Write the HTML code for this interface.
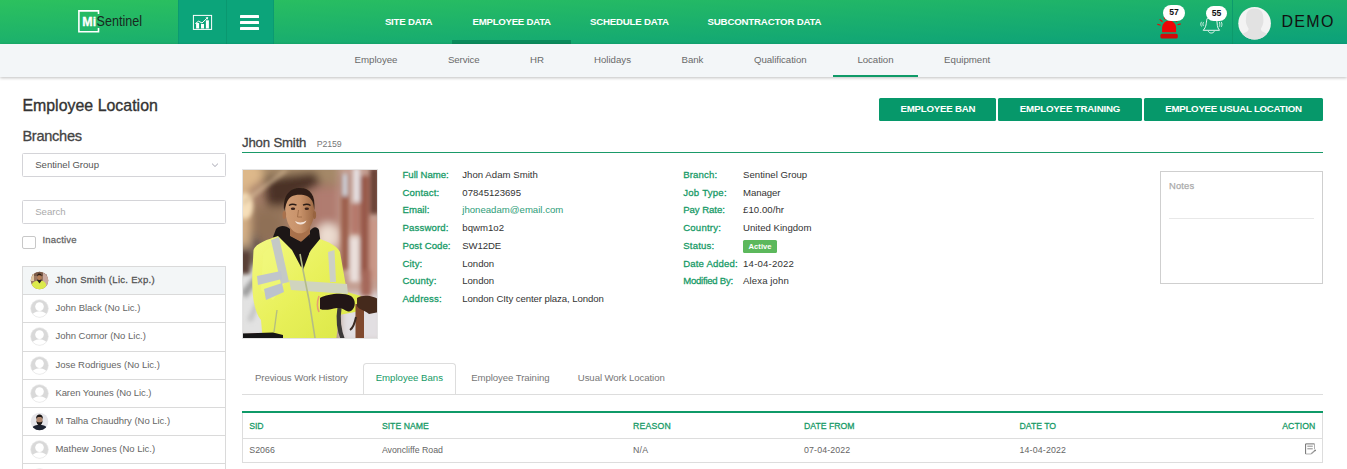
<!DOCTYPE html>
<html lang="en">
<head>
<meta charset="utf-8">
<title>Employee Location</title>
<style>
*{box-sizing:border-box;margin:0;padding:0}
html,body{width:1347px;height:469px;overflow:hidden;background:#fff}
body{font-family:"Liberation Sans",Arial,sans-serif;color:#333;position:relative;font-size:10px}
.abs{position:absolute}
.x{position:absolute;white-space:nowrap;line-height:20px;height:20px}
#hdr{position:absolute;left:0;top:0;width:1347px;height:44px;background:linear-gradient(to bottom right,#2cc15e,#0ba07a)}
#hdr .btn{position:absolute;top:0;height:44px;background:#0ca47a}
#sub{position:absolute;left:0;top:44px;width:1347px;height:33px;background:#f3f6f8;box-shadow:0 1px 3px rgba(0,0,0,.25)}
.gbtn{position:absolute;top:98px;height:23px;background:#06986a;border-radius:1.5px}
.li{position:absolute;left:22px;width:204px;height:29px;border:1px solid #dadada;background:#fff}
.li.sel{background:#f3f6f7}
.inp{position:absolute;left:22px;width:204px;height:24px;border:1px solid #d4d4d8;border-radius:1.5px;background:#fff}
.hl{position:absolute;left:242px;width:1081px;height:1px;background:#ddd}
</style>
</head>
<body>
<div id="hdr">
  <svg class="abs" style="left:70px;top:0" width="80" height="44" viewBox="70 0 80 44">
    <path d="M98.500 14V10.900H78.900V31.800H98.500V28" fill="none" stroke="#fff" stroke-width="1.600"/>
    <text x="82.300" y="26.100" font-family="Liberation Sans, Arial, sans-serif" font-weight="bold" font-size="13.600" fill="#fff" stroke="#fff" stroke-width=".32" textLength="13.800" lengthAdjust="spacingAndGlyphs">Mi</text>
    <text x="96.600" y="26.300" font-family="Liberation Sans, Arial, sans-serif" font-size="14.700" fill="#18281f" textLength="45.400" lengthAdjust="spacingAndGlyphs">Sentinel</text>
  </svg>
  <div class="btn" style="left:178px;width:96px"></div>
  <div class="abs" style="left:178px;top:0;width:1px;height:44px;background:#0b9a72"></div>
  <div class="abs" style="left:226px;top:0;width:1px;height:44px;background:#0a9870"></div>
  <div class="abs" style="left:273px;top:0;width:1px;height:44px;background:#0b9a72"></div>
  <svg class="abs" style="left:190px;top:12px" width="26" height="21" viewBox="190 12 26 21">
    <rect x="193.400" y="15.400" width="18.200" height="14" fill="none" stroke="#fff" stroke-width="1"/>
    <rect x="196.100" y="23" width="3" height="5.500" fill="#fff"/>
    <rect x="201" y="24" width="3" height="4.500" fill="#fff"/>
    <rect x="205.900" y="20.300" width="3" height="8.200" fill="#fff"/>
    <path d="M195.300 23.600L198.600 21.200L202 23L207 18.200" fill="none" stroke="#fff" stroke-width="1"/>
    <path d="M205.500 17.600L208.200 17L207.700 19.800Z" fill="#fff"/>
  </svg>
  
  <div class="abs" style="left:240px;top:15px;width:19.200px;height:3px;background:#fff;border-radius:.6px"></div>
  <div class="abs" style="left:240px;top:21px;width:19.200px;height:3px;background:#fff;border-radius:.6px"></div>
  <div class="abs" style="left:240px;top:27px;width:19.200px;height:3px;background:#fff;border-radius:.6px"></div>
  <div class="abs" style="left:452px;top:40px;width:119px;height:4px;background:#0b8b5c"></div>

  <!-- siren -->
  <svg class="abs" style="left:1150px;top:0" width="40" height="44" viewBox="1150 0 40 44">
    <path d="M1162.100 32.300V27.600a7 7 0 0 1 14 0V32.300Z" fill="#ee0505"/>
    <rect x="1160.400" y="33.700" width="17.400" height="4.900" rx="1.700" fill="#d20a0a"/>
    <path d="M1157.300 24.200L1160.600 25.300M1159.700 19.400L1162.500 21.700M1164 17.400L1165.500 19.400M1180.700 23.900L1177.500 24.700M1178.500 19.600L1176 21.600" stroke="#ee0505" stroke-width="1.100" fill="none"/>
  </svg>
  <div class="abs" style="left:1163px;top:5.300px;width:22px;height:15.500px;border-radius:8px;background:#fff"></div>
  <div class="x" style="left:1163px;width:22px;top:2.200px;text-align:center;font-size:8.600px;font-weight:bold;color:#111">57</div>
  <!-- bell -->
  <svg class="abs" style="left:1196px;top:10px" width="32" height="28" viewBox="1196 10 32 28">
    <path d="M1206.800 19.500C1206.200 23 1206.400 27 1203.200 30.300H1219.500C1216.800 27.500 1217.400 23.500 1216.800 20.500C1216.200 17.500 1214.200 16.500 1211.800 16.500C1209.400 16.500 1207.300 17.500 1206.800 19.500Z" fill="none" stroke="#fff" stroke-width=".9"/>
    <path d="M1208.300 31.300C1209.300 33.600 1213.300 33.600 1214.300 31.300" fill="none" stroke="#fff" stroke-width=".9"/>
    <path d="M1201.600 21.800C1200.500 23.300 1200.500 25 1201.600 26.500M1203.500 22.200C1202.700 23.400 1202.700 24.900 1203.500 26.100M1219.300 21.800C1220 23.300 1220 25.200 1219.300 26.700M1221.200 21.800C1222.200 23.300 1222.200 25.300 1221.200 26.900" fill="none" stroke="#fff" stroke-width=".8"/>
  </svg>
  <div class="abs" style="left:1206px;top:6px;width:21px;height:15.400px;border-radius:8px;background:#fff"></div>
  <div class="x" style="left:1206px;width:21px;top:3px;text-align:center;font-size:8.600px;font-weight:bold;color:#111">55</div>
  <div class="abs" style="left:1232px;top:0;width:1px;height:44px;background:#0d9a6c"></div>
  <svg class="abs" style="left:1238px;top:6.600px" width="34" height="34" viewBox="0 0 34 34">
    <defs><clipPath id="avc"><circle cx="16.600" cy="16.300" r="16.300"/></clipPath></defs>
    <circle cx="16.600" cy="16.300" r="16.300" fill="#f3f3f3"/>
    <g clip-path="url(#avc)" fill="#e2e2e2">
      <path d="M16.700 1.600C11.500 1.600 8.500 4.500 8.300 8.500C8.100 11 7.600 13 8 15.600C8.400 18.200 9.600 20 10.500 21.400C10.700 22.600 10.300 23.600 9.500 24.300C8 25.400 6.200 26 4.700 26.700C2.500 27.800 1 30 0 34H33.400C32.400 30 30.900 27.800 28.800 26.700C27.200 26 25.500 25.400 24 24.300C23.200 23.600 22.800 22.600 23 21.400C23.900 20 25 18.200 25.300 15.600C25.700 13 25.200 11 25 8.500C24.800 4.500 21.900 1.600 16.700 1.600Z"/>
    </g>
  </svg>
</div>
<div id="sub">
  <div class="abs" style="left:833px;top:31px;width:85px;height:2px;background:#0f9a68"></div>
</div>

<!-- left panel -->
<div class="inp" style="top:153px"></div>
<svg class="abs" style="left:210px;top:161px" width="10" height="8" viewBox="0 0 10 8"><path d="M2.100 2.700L5 5.500L7.900 2.700" fill="none" stroke="#a6a6b2" stroke-width="1"/></svg>
<div class="inp" style="top:200px"></div>
<div class="abs" style="left:22px;top:236px;width:13.500px;height:12.500px;border:1px solid #c8c8c8;border-radius:2px;background:#fff"></div>
<div class="li sel" style="top:266px;height:29px"></div>
<div class="li" style="top:294px;height:29px"></div>
<div class="li" style="top:322px;height:30px"></div>
<div class="li" style="top:351px;height:29px"></div>
<div class="li" style="top:379px;height:29px"></div>
<div class="li" style="top:407px;height:29px"></div>
<div class="li" style="top:435px;height:29px"></div>
<div class="li" style="top:463px;height:29px"></div>
<svg class="abs" style="left:29.60px;top:270.90px" width="19" height="19" viewBox="0 0 19 19"><defs><clipPath id="lc"><circle cx="9.5" cy="9.5" r="8.800"/></clipPath></defs><circle cx="9.5" cy="9.5" r="8.8" fill="#9a7660"/><g clip-path="url(#lc)"><rect x="0" y="0" width="19" height="5" fill="#7a5a48"/><rect x="13" y="2" width="6" height="12" fill="#c9a99f"/><rect x="0" y="3" width="4" height="7" fill="#e0c6a2"/><path d="M2 19V13C3 10.500 6 10 7.500 9.500L9.500 12L11.500 9.500C13 10 15 10.500 16 13V19Z" fill="#dcea4c"/><path d="M7 9.300L9.500 12.500L11.800 9.300L11 8H8Z" fill="#2a2220"/><ellipse cx="9.400" cy="6.300" rx="2.100" ry="2.800" fill="#b47c55"/><path d="M7.200 5.600C7 3 8.500 2.600 9.400 2.600C10.500 2.600 11.800 3.200 11.600 5.600C11 4.400 10.400 4.200 9.400 4.200C8.400 4.200 7.800 4.400 7.200 5.600Z" fill="#2c1d15"/></g></svg>
<svg class="abs" style="left:29.60px;top:298.90px" width="19" height="19" viewBox="0 0 19 19"><circle cx="9.5" cy="9.5" r="8.800" fill="#d9d9d9"/><g clip-path="url(#lc)"><circle cx="9.500" cy="7.600" r="4.300" fill="#fff"/><ellipse cx="9.500" cy="18.300" rx="8.200" ry="6" fill="#fff"/></g><circle cx="9.5" cy="9.5" r="8.800" fill="none" stroke="#e4e4e4" stroke-width=".6"/></svg>
<svg class="abs" style="left:29.60px;top:326.90px" width="19" height="19" viewBox="0 0 19 19"><circle cx="9.5" cy="9.5" r="8.800" fill="#d9d9d9"/><g clip-path="url(#lc)"><circle cx="9.500" cy="7.600" r="4.300" fill="#fff"/><ellipse cx="9.500" cy="18.300" rx="8.200" ry="6" fill="#fff"/></g><circle cx="9.5" cy="9.5" r="8.800" fill="none" stroke="#e4e4e4" stroke-width=".6"/></svg>
<svg class="abs" style="left:29.60px;top:355.90px" width="19" height="19" viewBox="0 0 19 19"><circle cx="9.5" cy="9.5" r="8.800" fill="#d9d9d9"/><g clip-path="url(#lc)"><circle cx="9.500" cy="7.600" r="4.300" fill="#fff"/><ellipse cx="9.500" cy="18.300" rx="8.200" ry="6" fill="#fff"/></g><circle cx="9.5" cy="9.5" r="8.800" fill="none" stroke="#e4e4e4" stroke-width=".6"/></svg>
<svg class="abs" style="left:29.60px;top:383.90px" width="19" height="19" viewBox="0 0 19 19"><circle cx="9.5" cy="9.5" r="8.800" fill="#d9d9d9"/><g clip-path="url(#lc)"><circle cx="9.500" cy="7.600" r="4.300" fill="#fff"/><ellipse cx="9.500" cy="18.300" rx="8.200" ry="6" fill="#fff"/></g><circle cx="9.5" cy="9.5" r="8.800" fill="none" stroke="#e4e4e4" stroke-width=".6"/></svg>
<svg class="abs" style="left:29.60px;top:411.90px" width="19" height="19" viewBox="0 0 19 19"><circle cx="9.5" cy="9.5" r="8.8" fill="#e6e6ea"/><g clip-path="url(#lc)"><path d="M2 19V16C3 13.500 6.500 13 9.500 13C12.500 13 16 13.500 17 16V19Z" fill="#1c2230"/><ellipse cx="9.500" cy="8" rx="3.100" ry="4" fill="#b08870"/><path d="M6.400 8.500C6.600 12 8 13.200 9.500 13.200C11 13.200 12.400 12 12.600 8.500C12 10 11 10.200 9.500 10.200C8 10.200 7 10 6.400 8.500Z" fill="#1a1514"/><path d="M6.200 7.500C5.800 3.500 8 2.600 9.500 2.600C11 2.600 13.200 3.500 12.800 7.500C12.400 5.500 11.500 5 9.500 5C7.500 5 6.600 5.500 6.200 7.500Z" fill="#1a1514"/></g></svg>
<svg class="abs" style="left:29.60px;top:439.90px" width="19" height="19" viewBox="0 0 19 19"><circle cx="9.5" cy="9.5" r="8.800" fill="#d9d9d9"/><g clip-path="url(#lc)"><circle cx="9.500" cy="7.600" r="4.300" fill="#fff"/><ellipse cx="9.500" cy="18.300" rx="8.200" ry="6" fill="#fff"/></g><circle cx="9.5" cy="9.5" r="8.800" fill="none" stroke="#e4e4e4" stroke-width=".6"/></svg>
<svg class="abs" style="left:29.60px;top:467.90px" width="19" height="19" viewBox="0 0 19 19"><circle cx="9.5" cy="9.5" r="8.800" fill="#d9d9d9"/><g clip-path="url(#lc)"><circle cx="9.500" cy="7.600" r="4.300" fill="#fff"/><ellipse cx="9.500" cy="18.300" rx="8.200" ry="6" fill="#fff"/></g><circle cx="9.5" cy="9.5" r="8.800" fill="none" stroke="#e4e4e4" stroke-width=".6"/></svg>

<!-- action buttons -->
<div class="gbtn" style="left:879px;width:117px"></div>
<div class="gbtn" style="left:998px;width:144px"></div>
<div class="gbtn" style="left:1144px;width:179px"></div>

<!-- main -->
<div class="abs" style="left:242px;top:152px;width:1081px;height:1px;background:#1a9a69"></div>
<div class="abs" style="left:242px;top:169px;width:136px;height:170px;border:1px solid #e4e4e4"></div>
<svg class="abs" style="left:243px;top:170px" width="134" height="168" viewBox="0 0 134 168">
  <defs>
    <filter id="b4" x="-30%" y="-30%" width="160%" height="160%"><feGaussianBlur stdDeviation="4"/></filter>
    <filter id="b2" x="-30%" y="-30%" width="160%" height="160%"><feGaussianBlur stdDeviation="2"/></filter>
    <filter id="b1" x="-20%" y="-20%" width="140%" height="140%"><feGaussianBlur stdDeviation="1"/></filter>
    <filter id="b0" x="-20%" y="-20%" width="140%" height="140%"><feGaussianBlur stdDeviation="0.75"/></filter>
    <clipPath id="pc"><rect width="134" height="168"/></clipPath>
    <linearGradient id="jk" x1="0" y1="0" x2="1" y2="1">
      <stop offset="0" stop-color="#f3f884"/><stop offset=".45" stop-color="#e9f15c"/><stop offset="1" stop-color="#d9e644"/>
    </linearGradient>
    <linearGradient id="sk" x1="0" y1="0" x2="1" y2="0">
      <stop offset="0" stop-color="#cf9c74"/><stop offset=".5" stop-color="#c8926a"/><stop offset="1" stop-color="#9c6844"/>
    </linearGradient>
  </defs>
  <g clip-path="url(#pc)">
    <rect width="134" height="168" fill="#a27c66"/>
    <!-- soft background -->
    <g filter="url(#b4)">
      <rect x="-10" y="-10" width="160" height="22" fill="#a48868"/>
      <ellipse cx="4" cy="4" rx="16" ry="14" fill="#ddb88a"/>
      <path d="M22 8L72 2L78 14L56 24L42 36L24 36Z" fill="#4c3226"/>
      <rect x="8" y="36" width="34" height="36" fill="#94745a"/>
      <rect x="70" y="18" width="28" height="44" fill="#b07c70"/>
      <rect x="72" y="56" width="28" height="26" fill="#c9a092"/>
      <rect x="96" y="-8" width="46" height="140" fill="#c39d90"/>
      <rect x="-8" y="64" width="34" height="36" fill="#78665c"/>
      <rect x="-8" y="98" width="34" height="72" fill="#e2e2e2"/>
      <rect x="96" y="124" width="46" height="50" fill="#e2dfe2"/>
      <rect x="102" y="62" width="36" height="40" fill="#dcc2b6"/>
      <rect x="-8" y="14" width="15" height="62" fill="#ddb88c" opacity=".9"/>
      <ellipse cx="85" cy="66" rx="11" ry="13" fill="#ecdcd0"/>
      <ellipse cx="24" cy="58" rx="12" ry="16" fill="#8f6f56"/>
    </g>
    <g filter="url(#b2)">
      <ellipse cx="2" cy="36" rx="8" ry="13" fill="#f6dfba"/>
      <path d="M0 30L40 0L46 0L0 36Z" fill="#d9bc98" opacity=".7"/>
      <rect x="98" y="4" width="8" height="96" fill="#9c5e4c"/>
      <rect x="100" y="4" width="4" height="22" fill="#d9e2ea"/>
      <rect x="110" y="-2" width="7" height="34" fill="#e6e0e2"/>
      <rect x="117" y="6" width="9" height="100" fill="#98584a"/>
      <rect x="127" y="-2" width="9" height="46" fill="#6a4236"/>
      <rect x="108" y="34" width="8" height="30" fill="#b5786a"/>
      <rect x="107" y="68" width="9" height="44" fill="#eadfdc"/>
      <rect x="126" y="50" width="10" height="60" fill="#c99888"/>
      <rect x="-3" y="82" width="10" height="22" fill="#584034"/>
      <rect x="12" y="70" width="4" height="26" fill="#6d594e"/>
      <path d="M-2 122L14 102L19 106L3 128Z" fill="#9c9c9c"/>
      <path d="M4 150L18 120L22 122L9 152Z" fill="#c4c4c4"/>
      <rect x="118" y="100" width="10" height="26" fill="#a5685a"/>
    </g>
    <!-- figure -->
    <g filter="url(#b0)">
      <!-- hood -->
      <path d="M33 59C38 54 44 56 48 60L66 62C70 56 74 56 76 60L78 76L66 100L56 104L46 84L30 67Z" fill="#1c1919"/>
      <!-- neck -->
      <path d="M47 52H67V67L58 72L47 66Z" fill="#a9714b"/>
      <!-- jacket -->
      <path d="M10.500 80C13 73 25 69.500 35 66L49 80L58 97L68 80L77 69C86 72 94 76 97 82L104 122L118 126L122 138L112 142L96 145L93 172H20L18 150C10 140 8.500 120 9.500 100Z" fill="url(#jk)"/>
      <path d="M20 84C26 76 34 74 40 76L44 110L30 130L18 120Z" fill="#f1f87e" opacity=".55"/>
      <!-- inner black -->
      <path d="M46 66L58 72L67 64L66 84L60 100L54 86Z" fill="#1c1919"/>
      <!-- stripes -->
      <path d="M28 70L36 67L46 112L38 114Z" fill="#c4c9c6"/>
      <path d="M85 82L91.500 80L93 112L87 112Z" fill="#cdd0c4"/>
      <path d="M14 106L38 101L39 109L15 115Z" fill="#c0c5cc"/>
      <path d="M21 119L39 113L41 122L23 130Z" fill="#bcc2cc"/>
      <path d="M46 110L104 114L105 124L48 120Z" fill="#d0d4be"/>
      <path d="M57 84L60 100L66 130L72 168" fill="none" stroke="#b4bc86" stroke-width="1.600"/>
      <path d="M34 140L31 162" fill="none" stroke="#b5bf80" stroke-width="1.400"/>
      <path d="M76 126C74 132 74 138 76 142" fill="none" stroke="#e8a070" stroke-width="1.600"/>
      <!-- head -->
      <path d="M42.500 40C42.500 27 48 21 56.800 21C65.500 21 71.500 27 71.500 40C71.500 51 66 63.300 56.800 63.300C47.500 63.300 42.500 51 42.500 40Z" fill="url(#sk)"/>
      <path d="M41.200 41C39.500 25 47 18 57 18C67 18 73 25 71.200 40C70.800 33 69 28.500 64 26C60 24.300 52 24.300 48.500 26.500C44.500 29 43 34 41.200 41Z" fill="#2e1e16"/>
      <ellipse cx="41.300" cy="45" rx="1.800" ry="4" fill="#a9724d"/>
      <ellipse cx="71.500" cy="45" rx="1.600" ry="4" fill="#98643f"/>
      <path d="M52 51C55 53 60 53 63.500 50.500C62 55.500 54 56 52 51Z" fill="#f3e4da"/>
      <path d="M46 35.500C48 34 51 34 53.500 35.200M60 35.200C62.500 34 65.500 34 67.500 35.500" stroke="#2a1b14" stroke-width="1.300" fill="none"/>
      <ellipse cx="50" cy="38.800" rx="2.200" ry="1.200" fill="#3a241a"/>
      <ellipse cx="63.800" cy="38.800" rx="2.200" ry="1.200" fill="#3a241a"/>
      <path d="M55.500 40L54.500 47H59" stroke="#9a6844" stroke-width=".8" fill="none"/>
      <!-- handles + gloves -->
      <path d="M96.500 138C94.500 150 96 160 100 170" fill="none" stroke="#3a3838" stroke-width="4.200"/>
      <rect x="112.500" y="134" width="8.500" height="36" fill="#80492f"/>
      <path d="M107 160C110 158 112 152 113 147" fill="none" stroke="#3a2a24" stroke-width="2"/>
      <path d="M77 128C84 124 100 122 108 126C113 129 113 138 108 141C104 143 100 137 94 138C88 139 82 141 77 139Z" fill="#241813"/>
      <path d="M114 128C120 124 132 126 136 130V142L126 144C122 140 116 140 114 136Z" fill="#45291c"/>
      <path d="M-2 163.500L30 162.500L40 165V172H-2Z" fill="#181313"/>
    </g>
  </g>
</svg>

<div class="abs" style="left:743px;top:240px;width:34px;height:12.700px;background:#5cb85c;border-radius:1.500px"></div>
<div class="abs" style="left:1160px;top:171px;width:163px;height:113px;border:1px solid #cfcfcf"></div>
<div class="abs" style="left:1169px;top:218px;width:145px;height:1px;background:#e8e8e8"></div>

<!-- tabs -->
<div class="hl" style="top:394px"></div>
<div class="abs" style="left:363px;top:363px;width:93px;height:31px;border:1px solid #ddd;border-bottom:none;border-radius:3.500px 3.500px 0 0;background:#fff"></div>

<!-- table -->
<div class="abs" style="left:242px;top:413px;width:1081px;height:49.500px;border:1px solid #ddd;border-top:none;background:#fff"></div>
<div class="hl" style="top:438px"></div>
<div class="abs" style="left:242px;top:411px;width:1081px;height:2px;background:#0f9a68"></div>
<svg class="abs" style="left:1304px;top:441.600px" width="14" height="14" viewBox="0 0 14 14">
  <path d="M1.600 12V1.900H10.500" fill="none" stroke="#707070" stroke-width="1"/>
  <path d="M10.500 1.900V7.300M1.600 12H7.200" fill="none" stroke="#a8a8a8" stroke-width=".9"/>
  <path d="M3.300 4.200H8.800M3.300 6.800H8.800" stroke="#808080" stroke-width=".9"/>
  <path d="M7.200 11.800L11.300 8.200" stroke="#9a9a9a" stroke-width="1.300"/>
  <path d="M10.300 8.300L11.800 7.400L11.700 9.200Z" fill="#666"/>
</svg>
<div class="x" id="t0" style="left:384.9px;top:12.00px;font-size:9.7px;color:#fff;letter-spacing:-0.245px;font-weight:bold;">SITE DATA</div>
<div class="x" id="t1" style="left:472.5px;top:12.00px;font-size:9.7px;color:#fff;letter-spacing:-0.285px;font-weight:bold;">EMPLOYEE DATA</div>
<div class="x" id="t2" style="left:589.9px;top:12.00px;font-size:9.7px;color:#fff;letter-spacing:-0.204px;font-weight:bold;">SCHEDULE DATA</div>
<div class="x" id="t3" style="left:707.5px;top:12.00px;font-size:9.7px;color:#fff;letter-spacing:-0.19px;font-weight:bold;">SUBCONTRACTOR DATA</div>
<div class="x" id="t4" style="left:354.5px;top:50.00px;font-size:9.7px;color:#6a6a6a;letter-spacing:-0.012px;">Employee</div>
<div class="x" id="t5" style="left:448px;top:50.00px;font-size:9.7px;color:#6a6a6a;letter-spacing:-0.116px;">Service</div>
<div class="x" id="t6" style="left:530px;top:50.00px;font-size:9.7px;color:#6a6a6a;letter-spacing:-0.1px;">HR</div>
<div class="x" id="t7" style="left:593.9px;top:50.00px;font-size:9.7px;color:#6a6a6a;letter-spacing:-0.007px;">Holidays</div>
<div class="x" id="t8" style="left:681.5px;top:50.00px;font-size:9.7px;color:#6a6a6a;letter-spacing:-0.048px;">Bank</div>
<div class="x" id="t9" style="left:753.9px;top:50.00px;font-size:9.7px;color:#6a6a6a;letter-spacing:-0.047px;">Qualification</div>
<div class="x" id="t10" style="left:857.4px;top:50.00px;font-size:9.7px;color:#6a6a6a;letter-spacing:-0.068px;">Location</div>
<div class="x" id="t11" style="left:944.1px;top:50.00px;font-size:9.7px;color:#6a6a6a;letter-spacing:-0.025px;">Equipment</div>
<div class="x" id="t12" style="left:22.4px;top:96.00px;font-size:15.9px;color:#333;letter-spacing:0.02px;-webkit-text-stroke:.35px #333;">Employee Location</div>
<div class="x" id="t13" style="left:22.4px;top:126.00px;font-size:14.6px;color:#444;letter-spacing:-0.282px;-webkit-text-stroke:.3px #444;">Branches</div>
<div class="x" id="t14" style="left:242px;top:133.00px;font-size:13.2px;color:#444;letter-spacing:-0.168px;-webkit-text-stroke:.3px #444;">Jhon Smith</div>
<div class="x" id="t15" style="left:316.8px;top:134.00px;font-size:8.8px;color:#777;letter-spacing:-0.127px;">P2159</div>
<div class="x" id="t16" style="left:35.2px;top:155.00px;font-size:9.6px;color:#555;letter-spacing:-0.014px;">Sentinel Group</div>
<div class="x" id="t17" style="left:35.2px;top:202.00px;font-size:9.6px;color:#aaa;letter-spacing:-0.001px;">Search</div>
<div class="x" id="t18" style="left:42.4px;top:230.00px;font-size:9.5px;color:#666;letter-spacing:0.206px;-webkit-text-stroke:0.27px #666;">Inactive</div>
<div class="x" id="t19" style="left:55.4px;top:270.00px;font-size:9.5px;color:#555;letter-spacing:0.299px;-webkit-text-stroke:0.27px #555;">Jhon Smith (Lic. Exp.)</div>
<div class="x" id="t20" style="left:55.4px;top:298.00px;font-size:9.5px;color:#666;letter-spacing:-0.001px;">John Black (No Lic.)</div>
<div class="x" id="t21" style="left:55.4px;top:326.00px;font-size:9.5px;color:#666;letter-spacing:-0.015px;">John Cornor (No Lic.)</div>
<div class="x" id="t22" style="left:55.4px;top:355.00px;font-size:9.5px;color:#666;letter-spacing:-0.002px;">Jose Rodrigues (No Lic.)</div>
<div class="x" id="t23" style="left:55.4px;top:383.00px;font-size:9.5px;color:#666;letter-spacing:-0.077px;">Karen Younes (No Lic.)</div>
<div class="x" id="t24" style="left:55.4px;top:411.00px;font-size:9.5px;color:#666;letter-spacing:-0.03px;">M Talha Chaudhry (No Lic.)</div>
<div class="x" id="t25" style="left:55.4px;top:439.00px;font-size:9.5px;color:#666;letter-spacing:0.0px;">Mathew Jones (No Lic.)</div>
<div class="x" id="t26" style="left:900.4px;top:99.00px;font-size:9.7px;color:#fff;letter-spacing:-0.218px;font-weight:bold;">EMPLOYEE BAN</div>
<div class="x" id="t27" style="left:1019.7px;top:99.00px;font-size:9.7px;color:#fff;letter-spacing:-0.167px;font-weight:bold;">EMPLOYEE TRAINING</div>
<div class="x" id="t28" style="left:1165.2px;top:99.00px;font-size:9.7px;color:#fff;letter-spacing:-0.247px;font-weight:bold;">EMPLOYEE USUAL LOCATION</div>
<div class="x" id="t29" style="left:402.5px;top:165.00px;font-size:9.6px;color:#169a66;letter-spacing:-0.029px;-webkit-text-stroke:0.27px #169a66;">Full Name:</div>
<div class="x" id="t30" style="left:462.3px;top:165.00px;font-size:9.6px;color:#333;letter-spacing:0.026px;">Jhon Adam Smith</div>
<div class="x" id="t31" style="left:402.5px;top:183.00px;font-size:9.6px;color:#169a66;letter-spacing:0.146px;-webkit-text-stroke:0.27px #169a66;">Contact:</div>
<div class="x" id="t32" style="left:462.3px;top:183.00px;font-size:9.6px;color:#333;letter-spacing:-0.0px;">07845123695</div>
<div class="x" id="t33" style="left:402.5px;top:200.00px;font-size:9.6px;color:#169a66;letter-spacing:0.041px;-webkit-text-stroke:0.27px #169a66;">Email:</div>
<div class="x" id="t34" style="left:462.3px;top:200.00px;font-size:9.6px;color:#2e9d78;letter-spacing:0.003px;">jhoneadam@email.com</div>
<div class="x" id="t35" style="left:402.5px;top:218.00px;font-size:9.6px;color:#169a66;letter-spacing:0.145px;-webkit-text-stroke:0.27px #169a66;">Password:</div>
<div class="x" id="t36" style="left:462.3px;top:218.00px;font-size:9.6px;color:#333;letter-spacing:0.013px;">bqwm1o2</div>
<div class="x" id="t37" style="left:402.5px;top:236.00px;font-size:9.6px;color:#169a66;letter-spacing:0.063px;-webkit-text-stroke:0.27px #169a66;">Post Code:</div>
<div class="x" id="t38" style="left:462.3px;top:236.00px;font-size:9.6px;color:#333;letter-spacing:-0.126px;">SW12DE</div>
<div class="x" id="t39" style="left:402.5px;top:254.00px;font-size:9.6px;color:#169a66;letter-spacing:0.142px;-webkit-text-stroke:0.27px #169a66;">City:</div>
<div class="x" id="t40" style="left:462.3px;top:254.00px;font-size:9.6px;color:#333;letter-spacing:-0.053px;">London</div>
<div class="x" id="t41" style="left:402.5px;top:271.00px;font-size:9.6px;color:#169a66;letter-spacing:0.146px;-webkit-text-stroke:0.27px #169a66;">County:</div>
<div class="x" id="t42" style="left:462.3px;top:271.00px;font-size:9.6px;color:#333;letter-spacing:-0.053px;">London</div>
<div class="x" id="t43" style="left:402.5px;top:289.00px;font-size:9.6px;color:#169a66;letter-spacing:0.191px;-webkit-text-stroke:0.27px #169a66;">Address:</div>
<div class="x" id="t44" style="left:462.3px;top:289.00px;font-size:9.6px;color:#333;letter-spacing:-0.079px;">London CIty center plaza, London</div>
<div class="x" id="t45" style="left:683.2px;top:165.00px;font-size:9.6px;color:#169a66;letter-spacing:0.16px;-webkit-text-stroke:0.27px #169a66;">Branch:</div>
<div class="x" id="t46" style="left:743.1px;top:165.00px;font-size:9.6px;color:#333;letter-spacing:0.007px;">Sentinel Group</div>
<div class="x" id="t47" style="left:683.2px;top:183.00px;font-size:9.6px;color:#169a66;letter-spacing:0.251px;-webkit-text-stroke:0.27px #169a66;">Job Type:</div>
<div class="x" id="t48" style="left:743.1px;top:183.00px;font-size:9.6px;color:#333;letter-spacing:-0.068px;">Manager</div>
<div class="x" id="t49" style="left:683.2px;top:200.00px;font-size:9.6px;color:#169a66;letter-spacing:-0.049px;-webkit-text-stroke:0.27px #169a66;">Pay Rate:</div>
<div class="x" id="t50" style="left:743.1px;top:200.00px;font-size:9.6px;color:#333;letter-spacing:0.039px;">£10.00/hr</div>
<div class="x" id="t51" style="left:683.2px;top:218.00px;font-size:9.6px;color:#169a66;letter-spacing:0.204px;-webkit-text-stroke:0.27px #169a66;">Country:</div>
<div class="x" id="t52" style="left:743.1px;top:218.00px;font-size:9.6px;color:#333;letter-spacing:0.002px;">United Kingdom</div>
<div class="x" id="t53" style="left:683.2px;top:236.00px;font-size:9.6px;color:#169a66;letter-spacing:0.189px;-webkit-text-stroke:0.27px #169a66;">Status:</div>
<div class="x" id="t54" style="left:683.2px;top:254.00px;font-size:9.6px;color:#169a66;letter-spacing:0.163px;-webkit-text-stroke:0.27px #169a66;">Date Added:</div>
<div class="x" id="t55" style="left:743.1px;top:254.00px;font-size:9.6px;color:#333;letter-spacing:0.182px;">14-04-2022</div>
<div class="x" id="t56" style="left:683.2px;top:271.00px;font-size:9.6px;color:#169a66;letter-spacing:-0.25px;-webkit-text-stroke:0.27px #169a66;">Modified By:</div>
<div class="x" id="t57" style="left:743.1px;top:271.00px;font-size:9.6px;color:#333;letter-spacing:0.1px;">Alexa john</div>
<div class="x" id="t58" style="left:748.6px;top:237.00px;font-size:7.6px;color:#fff;letter-spacing:0.017px;font-weight:bold;">Active</div>
<div class="x" id="t59" style="left:1169px;top:176.00px;font-size:9.4px;color:#aaa;letter-spacing:0.16px;-webkit-text-stroke:.25px #aaa;">Notes</div>
<div class="x" id="t60" style="left:255px;top:368.00px;font-size:9.6px;color:#777;letter-spacing:-0.096px;">Previous Work History</div>
<div class="x" id="t61" style="left:375.7px;top:368.00px;font-size:9.6px;color:#169a66;letter-spacing:0.007px;">Employee Bans</div>
<div class="x" id="t62" style="left:471.2px;top:368.00px;font-size:9.6px;color:#777;letter-spacing:-0.069px;">Employee Training</div>
<div class="x" id="t63" style="left:577.8px;top:368.00px;font-size:9.6px;color:#777;letter-spacing:-0.076px;">Usual Work Location</div>
<div class="x" id="t64" style="left:249.3px;top:416.00px;font-size:8.7px;color:#169a66;letter-spacing:-0.161px;-webkit-text-stroke:0.27px #169a66;">SID</div>
<div class="x" id="t65" style="left:381.9px;top:416.00px;font-size:8.7px;color:#169a66;letter-spacing:0.008px;-webkit-text-stroke:0.27px #169a66;">SITE NAME</div>
<div class="x" id="t66" style="left:633px;top:416.00px;font-size:8.7px;color:#169a66;letter-spacing:0.199px;-webkit-text-stroke:0.27px #169a66;">REASON</div>
<div class="x" id="t67" style="left:804px;top:416.00px;font-size:8.7px;color:#169a66;letter-spacing:-0.002px;-webkit-text-stroke:0.27px #169a66;">DATE FROM</div>
<div class="x" id="t68" style="left:1019.5px;top:416.00px;font-size:8.7px;color:#169a66;letter-spacing:-0.012px;-webkit-text-stroke:0.27px #169a66;">DATE TO</div>
<div class="x" id="t69" style="left:1282.2px;top:416.00px;font-size:8.7px;color:#169a66;letter-spacing:0.062px;-webkit-text-stroke:0.27px #169a66;">ACTION</div>
<div class="x" id="t70" style="left:249.3px;top:440.00px;font-size:8.8px;color:#666;letter-spacing:0.013px;">S2066</div>
<div class="x" id="t71" style="left:381.9px;top:440.00px;font-size:8.8px;color:#666;letter-spacing:-0.013px;">Avoncliffe Road</div>
<div class="x" id="t72" style="left:633px;top:440.00px;font-size:8.8px;color:#666;letter-spacing:0.209px;">N/A</div>
<div class="x" id="t73" style="left:804px;top:440.00px;font-size:8.8px;color:#666;letter-spacing:0.14px;">07-04-2022</div>
<div class="x" id="t74" style="left:1019.5px;top:440.00px;font-size:8.8px;color:#666;letter-spacing:0.16px;">14-04-2022</div>
<div class="x" id="t75" style="left:1281.5px;top:12.00px;font-size:16px;color:#111;letter-spacing:1.3px;">DEMO</div>
</body>
</html>
